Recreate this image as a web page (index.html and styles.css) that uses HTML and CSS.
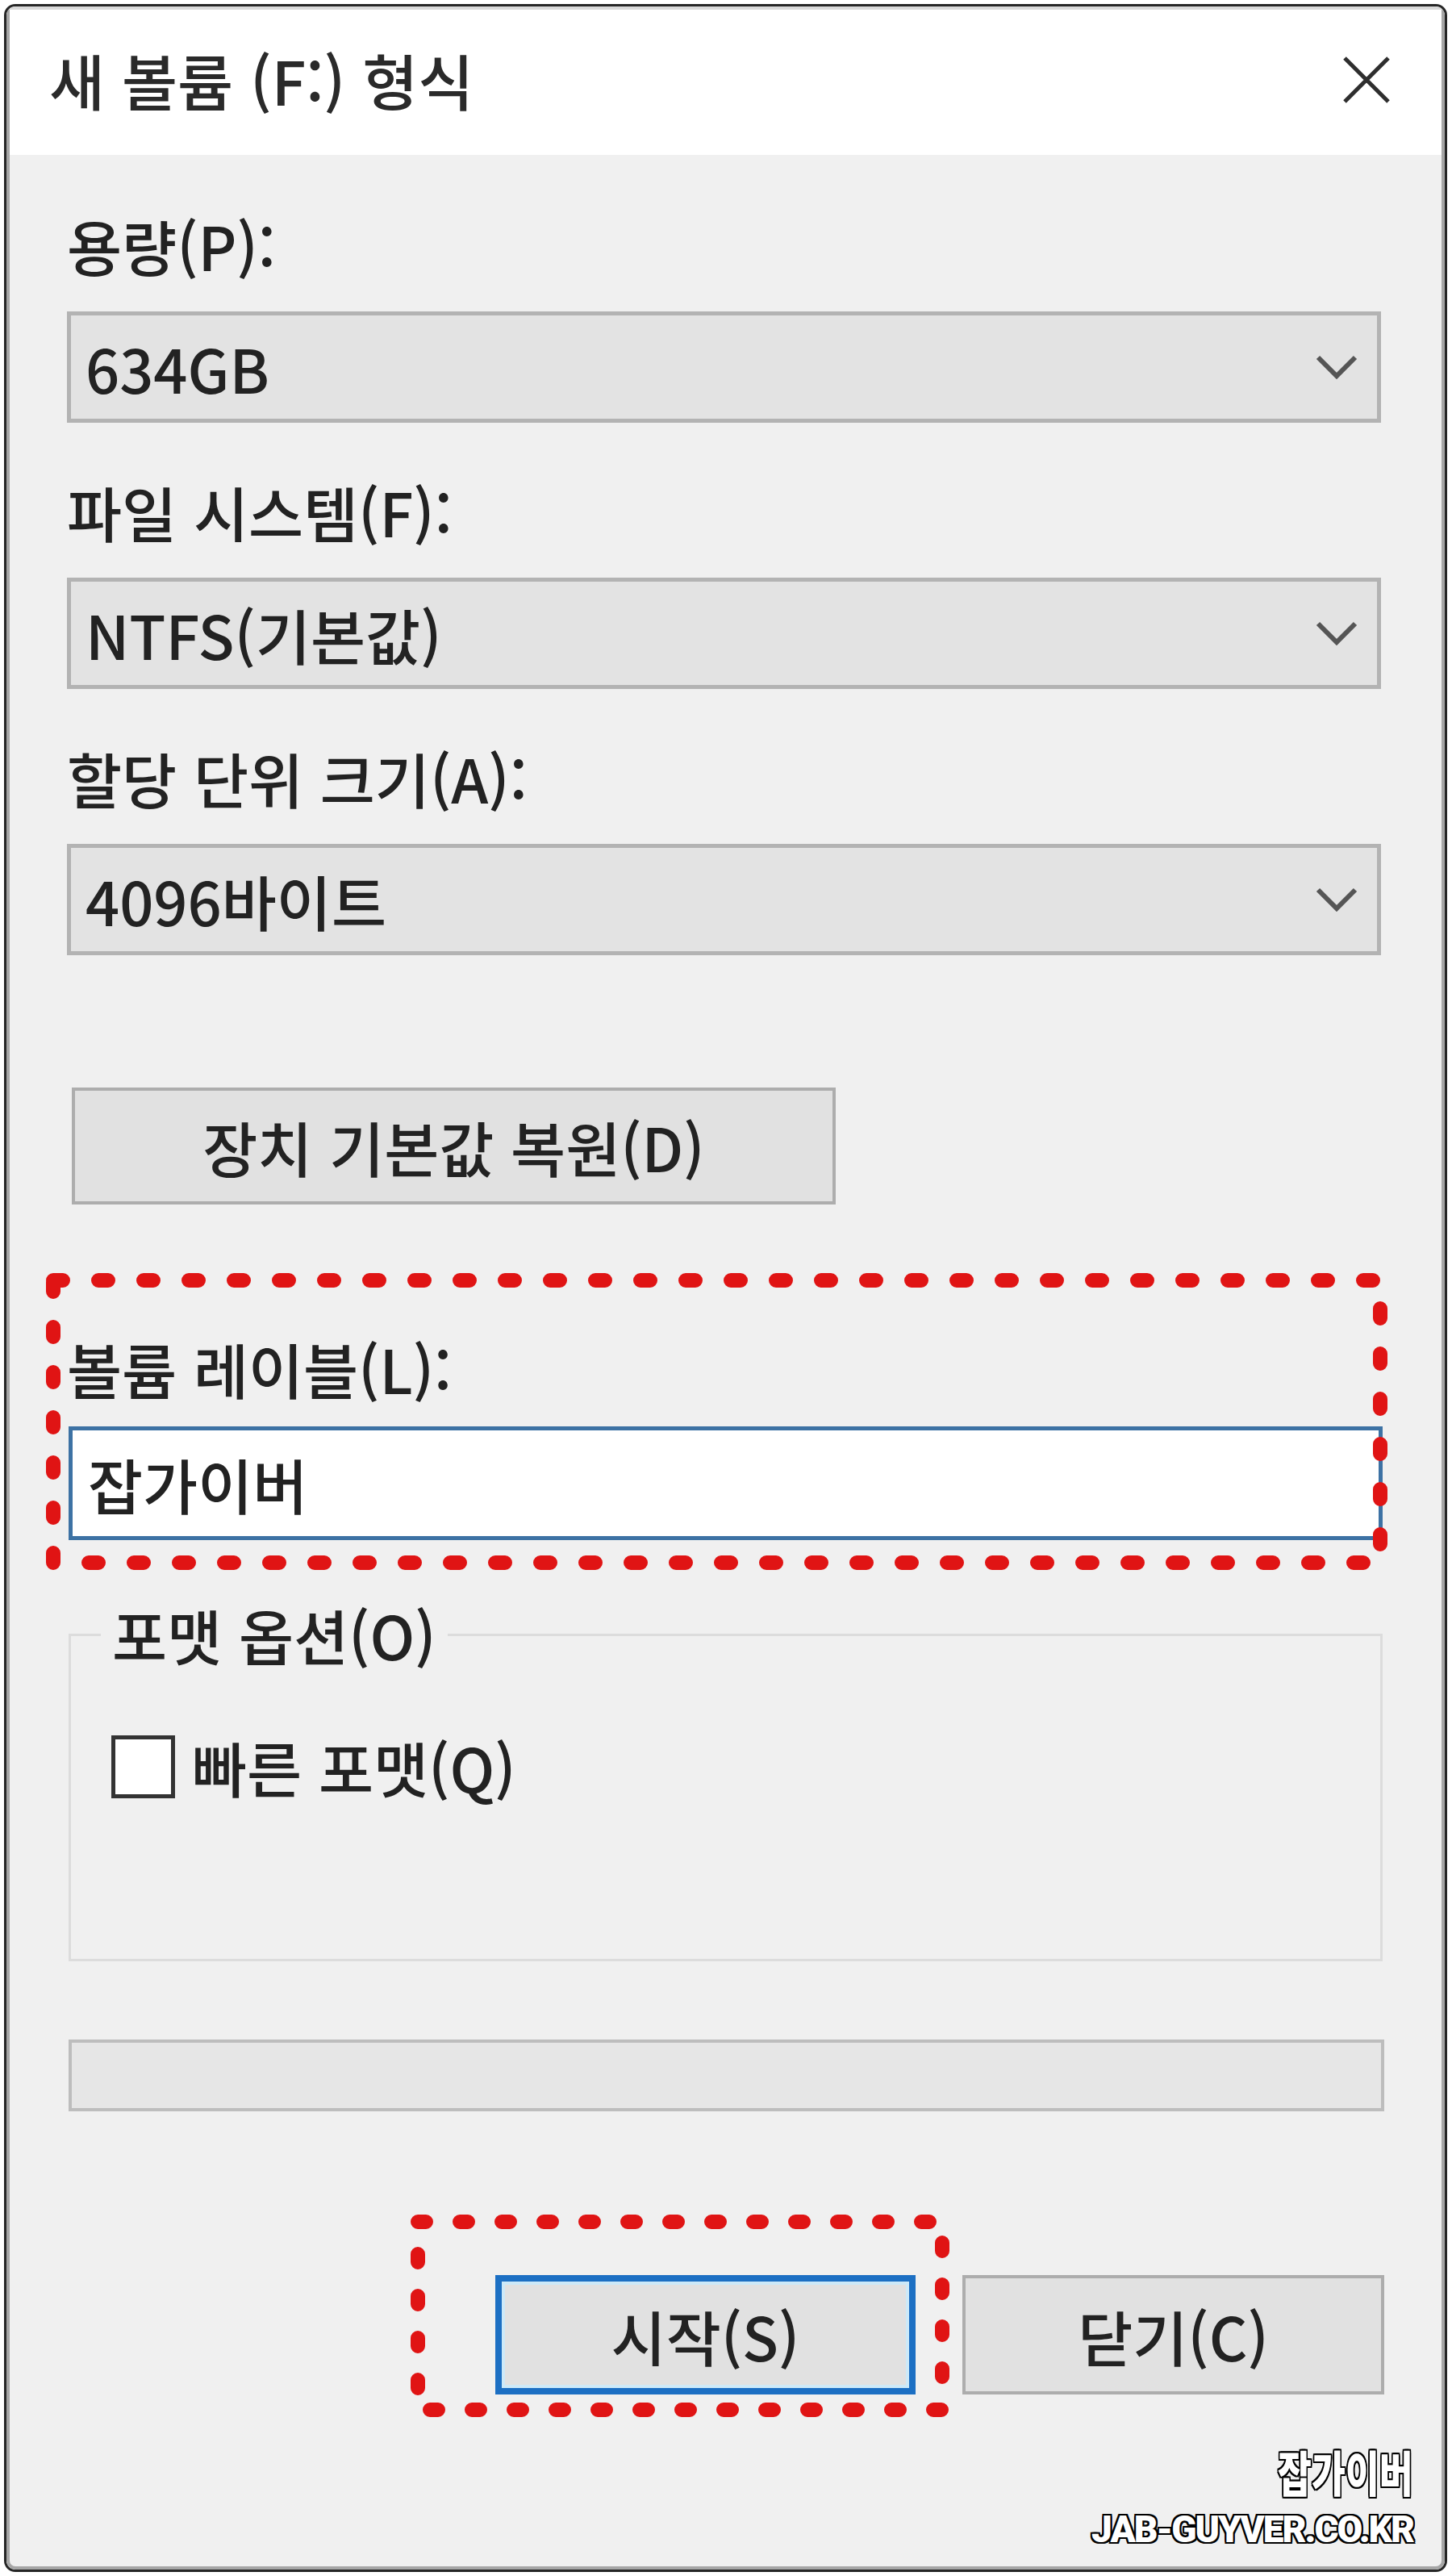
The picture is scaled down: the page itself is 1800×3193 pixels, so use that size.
FILE: index.html
```html
<!DOCTYPE html>
<html lang="ko">
<head>
    <meta charset="UTF-8">
    <meta name="viewport" content="width=device-width, initial-scale=1.0">
    <title>새 볼륨 (F:) 형식</title>
    <link rel="stylesheet" href="styles.css">
</head>
<body>

    <div class="window">
        <div class="frame">

            <!-- Title bar -->
            <div class="titlebar">
                <div class="title">새 볼륨 (F:) 형식</div>
                <svg class="close" width="62" height="62" viewBox="0 0 62 62">
                    <path d="M4 4 L58 58 M58 4 L4 58" stroke="#2e2e2e" stroke-width="5" fill="none"/>
                </svg>
            </div>

            <div class="content">

                <div class="field">
                    <div class="label">용량(P):</div>
                    <div class="combo">
                        <span>634GB</span>
                        <svg class="chevron" width="52" height="30" viewBox="0 0 52 30">
                            <polyline points="3,3 26,26 49,3" stroke="#555" stroke-width="6" fill="none"/>
                        </svg>
                    </div>
                </div>

                <div class="field">
                    <div class="label">파일 시스템(F):</div>
                    <div class="combo">
                        <span>NTFS(기본값)</span>
                        <svg class="chevron" width="52" height="30" viewBox="0 0 52 30">
                            <polyline points="3,3 26,26 49,3" stroke="#555" stroke-width="6" fill="none"/>
                        </svg>
                    </div>
                </div>

                <div class="field">
                    <div class="label">할당 단위 크기(A):</div>
                    <div class="combo">
                        <span>4096바이트</span>
                        <svg class="chevron" width="52" height="30" viewBox="0 0 52 30">
                            <polyline points="3,3 26,26 49,3" stroke="#555" stroke-width="6" fill="none"/>
                        </svg>
                    </div>
                </div>

                <div class="btn restore">장치 기본값 복원(D)</div>

                <!-- Volume label (highlighted) -->
                <div class="volume">
                    <div class="label tight">볼륨 레이블(L):</div>
                    <div class="textbox">잡가이버</div>
                    <svg class="mark mark-volume" width="1663" height="368" viewBox="0 0 1663 368">
                        <rect x="9" y="9" width="1645" height="350" fill="none" stroke="#e01414" stroke-width="18" stroke-linecap="round" stroke-dasharray="12 44"/>
                    </svg>
                </div>

                <fieldset class="group">
                    <legend>포맷 옵션(O)</legend>
                    <div class="check-row">
                        <span class="checkbox"></span>
                        <span>빠른 포맷(Q)</span>
                    </div>
                </fieldset>

                <div class="progress"></div>

                <div class="actions">
                    <div class="btn primary">
                        시작(S)
                        <svg class="mark mark-start" width="668" height="251" viewBox="0 0 668 251">
                            <rect x="9" y="9" width="650" height="233" fill="none" stroke="#e01414" stroke-width="18" stroke-linecap="round" stroke-dasharray="10 42"/>
                        </svg>
                    </div>
                    <div class="btn">닫기(C)</div>
                </div>

                <div class="watermark">
                    <div class="wm-ko"><span>잡가이버</span></div>
                    <div class="wm-en">JAB-GUYVER.CO.KR</div>
                </div>

            </div>
        </div>
    </div>

</body>
</html>
```

FILE: styles.css
```css
* {
    box-sizing: border-box;
}

body {
    margin: 0;
    background-color: #fff;
    font-family: "Noto Sans CJK KR", "Noto Sans", sans-serif;
    font-weight: 500;
    color: #222;
}

.window {
    width: 1789px;
    height: 3183px;
    margin: 5px 0 0 5px;
    border: 3px solid #262626;
    border-radius: 14px;
    overflow: hidden;
}

.frame {
    height: 100%;
    border: 4px solid #a6a6a6;
    border-top-color: #d9d9d9;
    border-radius: 11px;
    background-color: #f0f0f0;
}

.titlebar {
    height: 180px;
    background-color: #fff;
    display: flex;
    align-items: center;
    justify-content: space-between;
    padding: 0 62px 6px 49px;
}

.title {
    font-size: 75px;
    line-height: 100px;
    color: #2a2a2a;
}

.content {
    padding: 62px 75px 0 71px;
}

.label {
    font-size: 74px;
    line-height: 100px;
    margin-bottom: 32px;
}

.label.tight {
    margin-bottom: 22px;
}

.field + .field {
    margin-top: 60px;
}

.combo {
    height: 138px;
    border: 5px solid #b3b3b3;
    background-color: #e3e3e3;
    display: flex;
    align-items: center;
    justify-content: space-between;
    padding: 0 24px 0 18px;
    font-size: 74px;
}

.btn {
    height: 148px;
    width: 523px;
    border: 4px solid #adadad;
    background-color: #e1e1e1;
    display: flex;
    align-items: center;
    justify-content: center;
    font-size: 74px;
}

.btn.restore {
    width: 947px;
    height: 145px;
    margin: 164px 0 0 6px;
}

.btn.primary {
    position: relative;
    width: 521px;
    border: 8px solid #1c6fc3;
    box-shadow: inset 0 0 0 4px #cde9f8;
}

.volume {
    position: relative;
    margin-top: 153px;
}

.textbox {
    height: 141px;
    margin: 0 -2px 0 2px;
    border: 5px solid #3d72a4;
    background-color: #fff;
    display: flex;
    align-items: center;
    padding-left: 19px;
    font-size: 74px;
}

/* red dashed highlight boxes drawn over the dialog */
.mark {
    position: absolute;
    pointer-events: none;
}

.mark-volume {
    left: -26px;
    top: -68px;
}

.mark-start {
    left: -113px;
    top: -83px;
}

.group {
    margin: 67px -2px 0 2px;
    height: 455px;
    border: 3px solid #dcdcdc;
    padding: 64px 0 0 50px;
    min-width: 0;
}

.group legend {
    font-size: 74px;
    line-height: 100px;
    padding: 0 14px;
    margin-left: -13px;
}

.check-row {
    display: flex;
    align-items: center;
    gap: 21px;
    font-size: 74px;
    line-height: 100px;
}

.checkbox {
    width: 79px;
    height: 78px;
    border: 5px solid #333;
    background-color: #fff;
}

.progress {
    height: 89px;
    margin: 97px -4px 0 2px;
    border: 4px solid #bdbdbd;
    background-color: #e6e6e6;
}

.actions {
    display: flex;
    justify-content: flex-end;
    gap: 58px;
    margin: 203px -4px 0 0;
}

.watermark {
    margin: 64px -40px 0 0;
    text-align: right;
    color: #fff;
    font-weight: 900;
    text-shadow: 2px 0 0 #000, -2px 0 0 #000, 0 2px 0 #000, 0 -2px 0 #000,
                 2px 2px 0 #000, -2px 2px 0 #000, 2px -2px 0 #000, -2px -2px 0 #000;
}

.wm-ko {
    font-size: 60px;
    line-height: 62px;
    margin-bottom: 18px;
}

.wm-ko span {
    display: inline-block;
    transform: scaleX(0.76);
    transform-origin: right center;
}

.wm-en {
    font-family: Roboto, "Liberation Sans", sans-serif;
    font-size: 46px;
    line-height: 46px;
    letter-spacing: -2px;
}
```
